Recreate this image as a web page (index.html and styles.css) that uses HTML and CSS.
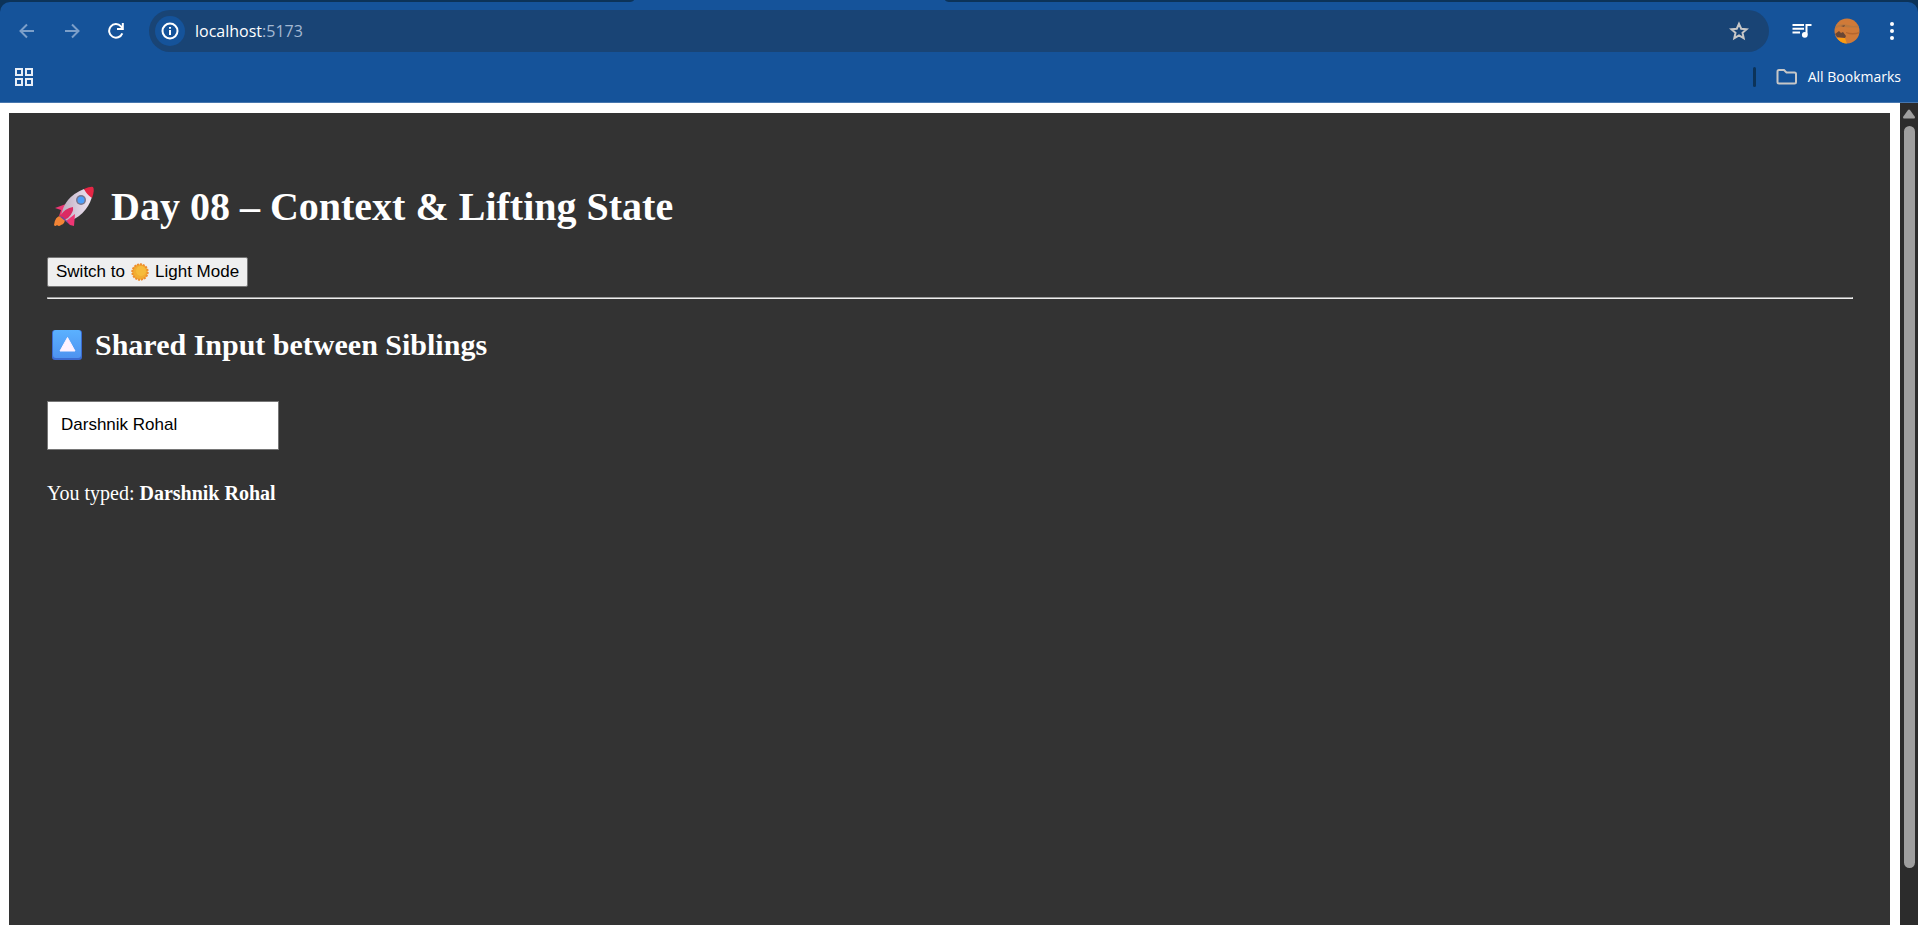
FILE: index.html
```
<!DOCTYPE html>
<html lang="en">
<head>
<meta charset="utf-8">
<title>Day 08</title>
<link rel="stylesheet" href="styles.css">
</head>
<body>
<header class="browser">
  <div class="tabstrip"><span class="tab-gap tab-gap-left"></span><span class="tab-active"></span><span class="tab-gap tab-gap-right"></span></div>
  <nav class="chrome">
    <div class="toolbar">
      <button class="tool dim" aria-label="Back"><svg width="16" height="16" viewBox="0 0 16 16"><path d="M15 8H2M8 1.500L1.500 8L8 14.500"/></svg></button>
      <button class="tool dim" aria-label="Forward"><svg width="16" height="16" viewBox="0 0 16 16"><path d="M1 8H14M8 1.500L14.500 8L8 14.500"/></svg></button>
      <button class="tool reload" aria-label="Reload"><svg width="16" height="16" viewBox="0 0 16 16"><path d="M14.300 10.300A6.800 6.800 0 1 1 13 3.300L14.300 5"/><path d="M14.800 0V6H9"/></svg></button>
      <div class="omnibox">
        <button class="site-info" aria-label="Site information"><svg width="18" height="18" viewBox="0 0 18 18"><circle cx="9" cy="9" r="7.500"/><path d="M9 8V13M9 5V6.700"/></svg></button>
        <span class="url">localhost<span class="port">:5173</span></span>
        <button class="star" aria-label="Bookmark this tab"><svg width="20" height="20" viewBox="0 0 20 20"><path d="M10 2.800L12.200 7.700L17.600 8.200L13.500 11.800L14.700 17.100L10 14.300L5.300 17.100L6.500 11.800L2.400 8.200L7.800 7.700Z"/></svg></button>
      </div>
      <button class="tool media" aria-label="Media controls"><svg width="20" height="16" viewBox="0 0 20 16"><path d="M.5 2H12M.5 5.700H12M.5 9.400H8M14.500 11.500V2H19.500"/><circle cx="12.800" cy="11.800" r="2.900"/></svg></button>
      <button class="tool profile" aria-label="Profile"><svg width="26" height="26" viewBox="0 0 26 26"><defs><clipPath id="face"><circle cx="13" cy="13" r="12.500"/></clipPath></defs><g clip-path="url(#face)"><rect width="26" height="26" fill="#d07a38"/><path d="M2 8Q8 5 14 7T25 7L26 9Q18 10 11 9T1 11Z" fill="#b9783f"/><path d="M1 16L5 13L7 15L9 14L12 18L11 20L3 19Z" fill="#694634"/><path d="M12 14Q18 16 26 14V15Q18 18 12 15Z" fill="#b5662f"/><path d="M3 20L11 20L13 26H7Z" fill="#fa9b12"/><path d="M7 8L11 7L10 9Z" fill="#754b36"/></g></svg></button>
      <button class="tool menu" aria-label="Menu"><svg width="6" height="20" viewBox="0 0 6 20"><circle cx="3" cy="3" r="2"/><circle cx="3" cy="10" r="2"/><circle cx="3" cy="17" r="2"/></svg></button>
    </div>
    <div class="bookmarks">
      <button class="apps" aria-label="Apps"><svg width="20" height="20" viewBox="0 0 20 20"><path d="M2 2H8V8H2ZM12 2H18V8H12ZM2 12H8V18H2ZM12 12H18V18H12Z"/></svg></button>
      <span class="divider"></span>
      <button class="all"><svg width="22" height="18" viewBox="0 0 22 18"><path d="M3 2H8L10.500 4.500H18.500Q20 4.500 20 6V14Q20 15.500 18.500 15.500H3Q1.500 15.500 1.500 14V3.500Q1.500 2 3 2Z"/></svg><span>All Bookmarks</span></button>
    </div>
  </nav>
</header>
<div class="viewport">
  <main class="page">
    <div class="app">
      <h1><svg class="rocket" width="42" height="42" viewBox="0 0 42 42" aria-hidden="true"><defs><linearGradient id="hull"><stop offset="0" stop-color="#b9a9bd"/><stop offset=".5" stop-color="#d8cadb"/><stop offset="1" stop-color="#eee5f2"/></linearGradient></defs><path d="M8 30Q2 30 1 39Q2 41 4 39Q6 41 8 39Q12 38 12 33Z" fill="#f38435"/><path d="M2 22L13 18L20 23L12 29L6 30L8 24Z" fill="#ed3674"/><path d="M8 30Q11 11 31 3L39 11Q33 30 14 36Z" fill="url(#hull)"/><path d="M31 3Q38 0 40 1Q42 4 39 12Q34 9 31 3Z" fill="#e52645"/><path d="M7 30Q12 22 20 21Q21 26 15 32L11 34Z" fill="#dc2a63"/><path d="M13 35L22 28L21 40L17 39Z" fill="#ed3674"/><path d="M6 30L16 38L14 35L10 31Z" fill="#704a9a"/><circle cx="28" cy="14" r="5" fill="#77758c"/><circle cx="28" cy="14" r="3.500" fill="#4d9efa"/></svg><span>Day 08 – Context &amp; Lifting State</span></h1>
      <button class="switch">Switch to <svg width="18" height="18" viewBox="0 0 18 18" aria-hidden="true"><circle cx="9" cy="9" r="7.800" fill="#f1ad32"/><circle class="rays" cx="9" cy="9" r="7.700"/><circle cx="10" cy="8" r="5" fill="#f6bb3b"/></svg> Light Mode</button>
      <hr>
      <h2><svg class="up" width="30" height="30" viewBox="0 0 30 30" aria-hidden="true"><defs><linearGradient id="key" x2="0" y2="1"><stop offset="0" stop-color="#5bb1ff"/><stop offset="1" stop-color="#4e93f0"/></linearGradient></defs><rect width="30" height="30" rx="3" fill="#3c6bd0"/><rect x="1" width="28" height="28" rx="3" fill="url(#key)"/><path d="M15.500 7.500L23 21H8Z" fill="#fff2ff" stroke="#fff2ff" stroke-linejoin="round"/></svg><span>Shared Input between Siblings</span></h2>
      <input class="name" type="text" value="Darshnik Rohal" aria-label="Name">
      <p>You typed: <strong>Darshnik Rohal</strong></p>
    </div>
  </main>
  <div class="scrollbar"><svg width="14" height="10" viewBox="0 0 14 10" aria-hidden="true"><path d="M6 1Q7 0 8 1L13 8Q13 9.500 12 9.500H2Q1 9.500 1 8Z"/></svg><span class="thumb"></span></div>
</div>
</body>
</html>
```
FILE: styles.css
```
* { box-sizing: border-box; }
body {
  margin: 0;
  height: 100vh;
  display: flex;
  flex-direction: column;
  overflow: hidden;
  background: #fff;
  font-family: "Liberation Serif", "Times New Roman", serif;
}
button { padding: 0; border: 0; background: none; color: inherit; }
svg { display: block; flex: none; }

.browser { background: #0c3359; font-family: "Open Sans", sans-serif; color: #fff; }
.tabstrip { display: flex; height: 2px; background: #15539a; }
.tab-gap { background: #0c3359; }
.tab-gap-left { flex: 634; border-bottom-right-radius: 6px 2px; }
.tab-active { flex: 311; }
.tab-gap-right { flex: 973; border-bottom-left-radius: 6px 2px; }
.chrome {
  background: #15539a;
  border-radius: 10px 10px 0 0;
  border-bottom: 1px solid #4676ae;
}
.toolbar { display: flex; align-items: center; padding: 8px 4px 0 9px; }
.tool {
  width: 45px;
  height: 42px;
  display: flex;
  align-items: center;
  justify-content: center;
}
.tool svg { fill: none; stroke: #fff; stroke-width: 2; }
.dim { padding-right: 10px; }
.dim svg { stroke: #7c9fc9; }
.reload { width: 50px; padding-right: 16px; }
.omnibox {
  flex: 1;
  height: 42px;
  padding: 0 20px 0 6px;
  display: flex;
  align-items: center;
  gap: 10px;
  border-radius: 21px;
  background: #194475;
}
.site-info {
  width: 30px;
  height: 30px;
  display: flex;
  align-items: center;
  justify-content: center;
  border-radius: 50%;
  background: #15539a;
}
.site-info svg { fill: none; stroke: #fff; stroke-width: 2; }
.url { flex: 1; font-size: 16px; line-height: 24px; }
.port { color: #a3b8d2; }
.star svg { fill: none; stroke: #c7c7c7; stroke-width: 2; }
.media { margin-left: 10px; }
.media circle { fill: #fff; stroke: none; }
.profile svg { stroke: none; }
.menu svg { fill: #fff; stroke: none; }
.bookmarks { display: flex; align-items: center; height: 50px; padding: 0 17px 0 14px; }
.apps svg { fill: none; stroke: #e8eef6; stroke-width: 2; }
.divider { width: 3px; height: 20px; margin-left: auto; border-radius: 2px; background: #0c3359; }
.all {
  margin-left: 20px;
  display: flex;
  align-items: center;
  gap: 10px;
  font: 14px/20px "Open Sans", sans-serif;
}
.all svg { fill: none; stroke: #c7c7c7; stroke-width: 2; }

.viewport { flex: 1; display: flex; min-height: 0; }
.page { flex: 1; display: flex; padding: 10px 10px 0 9px; }
.app { flex: 1; padding: 38px 37px 38px 38px; background: #333; color: #fff; }
h1, h2 { display: flex; align-items: center; }
h1 { margin: 33px 0 27px; gap: 16px; padding-left: 6px; font-size: 40px; line-height: 46px; }
h2 { margin: 28px 0 38px; gap: 13px; padding-left: 5px; font-size: 30px; line-height: 36px; }
.switch {
  display: flex;
  align-items: center;
  gap: 6px;
  height: 30px;
  padding: 0 8px;
  border: 1px solid #767676;
  border-radius: 2px;
  background: #efefef;
  color: #000;
  font: 17px/20px "Liberation Sans", Arial, sans-serif;
}
.rays { fill: none; stroke: #ee8b2d; stroke-width: 2; stroke-dasharray: 2 1; }
hr { margin: 10px 0 0; border: 1px solid; border-color: #9a9a9a #eee #eee #9a9a9a; }
.name {
  display: block;
  width: 232px;
  height: 49px;
  padding: 0 13px 2px;
  border: 1px solid #767676;
  background: #fff;
  color: #000;
  font: 17px/20px "Liberation Sans", Arial, sans-serif;
}
p { margin: 31px 0 0; font-size: 20px; line-height: 24px; }
.scrollbar {
  width: 18px;
  display: flex;
  flex-direction: column;
  align-items: center;
  gap: 7px;
  padding-top: 6px;
  background: #2c2c2c;
}
.scrollbar svg { fill: #9f9f9f; }
.thumb { width: 11px; height: 92%; max-height: calc(100% - 74px); border-radius: 6px; background: #9f9f9f; }
```
